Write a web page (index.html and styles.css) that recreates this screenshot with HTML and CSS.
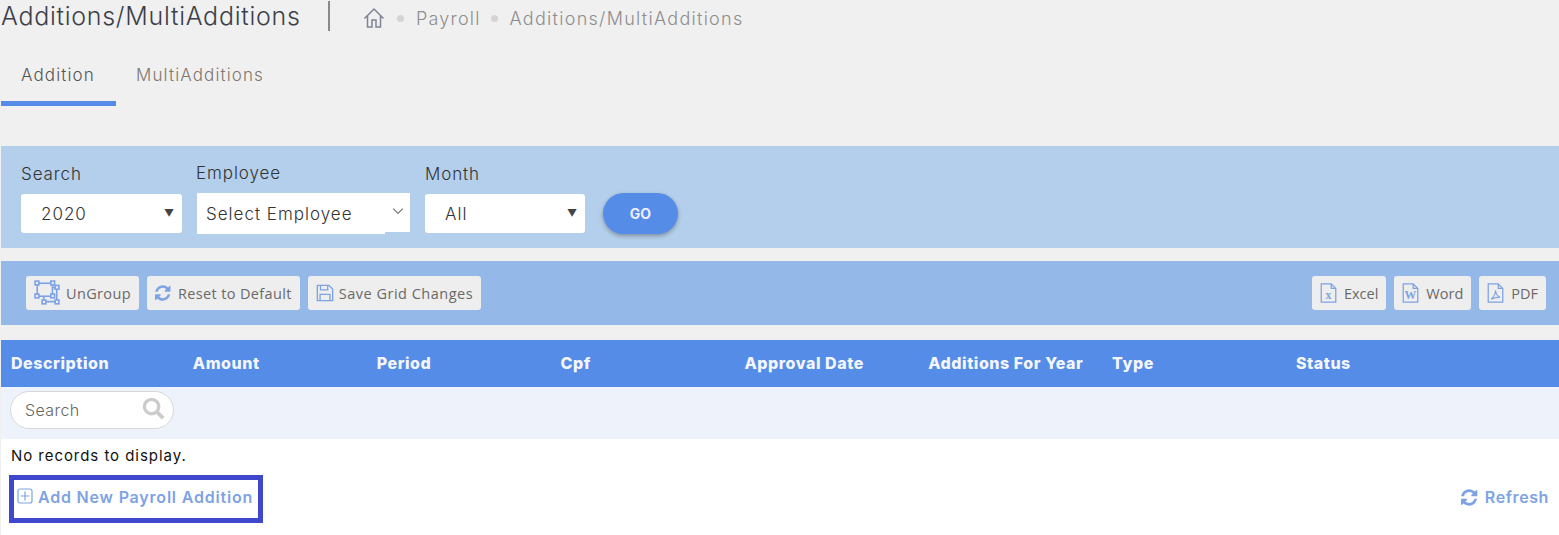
FILE: index.html
```html
<!DOCTYPE html>
<html lang="en">
<head>
<meta charset="utf-8">
<title>Additions/MultiAdditions</title>
<link rel="stylesheet" href="styles.css">
</head>
<body>
<header class="page-head">
  <h1 class="page-title">Additions/MultiAdditions</h1>
  <span class="head-sep"></span>
  <nav class="crumbs">
    <svg class="home-icon" viewBox="0 0 22 22"><path d="M1.500 11.500 11 2l9.500 9.500M4.500 9v11h4.500v-7h4v7h4.500V9" fill="none" stroke="#7f8494" stroke-width="1.500"/></svg>
    <i class="dot"></i><span class="crumb-first">Payroll</span><i class="dot"></i><span class="crumb-last">Additions/MultiAdditions</span>
  </nav>
</header>
<div class="tabs">
  <a class="tab active">Addition</a>
  <a class="tab">MultiAdditions</a>
</div>
<section class="filters">
  <div class="field"><label>Search</label><div class="select">2020<b class="caret">▼</b></div></div>
  <div class="field emp"><label>Employee</label><div class="select employee">Select Employee<svg class="chev" viewBox="0 0 10 6"><path d="M1 1l4 4 4-4" fill="none" stroke="#777" stroke-width="1"/></svg></div></div>
  <div class="field month"><label>Month</label><div class="select">All<b class="caret">▼</b></div></div>
  <button class="go">GO</button>
</section>
<section class="toolbar">
  <div class="tool-group">
    <a class="tool wide ug"><svg class="ic" viewBox="0 0 24 24"><g fill="none" stroke="#7ea3e4" stroke-width="1.500"><rect x="3" y="3" width="14" height="12"/><path d="M9 15v5h12V7h-4"/><rect x="1" y="1" width="3.500" height="3.500" fill="#eee"/><rect x="15.500" y="1" width="3.500" height="3.500" fill="#eee"/><rect x="1" y="13" width="3.500" height="3.500" fill="#eee"/><rect x="15.500" y="13" width="3.500" height="3.500" fill="#eee"/><rect x="19.500" y="5" width="3.500" height="3.500" fill="#eee"/><rect x="7.500" y="18.500" width="3.500" height="3.500" fill="#eee"/><rect x="19.500" y="18.500" width="3.500" height="3.500" fill="#eee"/></g></svg>UnGroup</a>
    <a class="tool wide"><svg class="ic sm" viewBox="0 0 1792 1792"><path fill="#7ea3e4" d="M1511 1056q0 5-1 7-64 268-268 434.500t-478 166.500q-146 0-282.500-55t-243.500-157l-129 129q-19 19-45 19t-45-19-19-45v-448q0-26 19-45t45-19h448q26 0 45 19t19 45-19 45l-137 137q71 66 161 102t187 36q134 0 250-65t186-179q11-17 53-117 8-23 30-23h192q13 0 22.500 9.500t9.500 22.500zm25-800v448q0 26-19 45t-45 19h-448q-26 0-45-19t-19-45 19-45l138-138q-148-137-349-137-134 0-250 65t-186 179q-11 17-53 117-8 23-30 23h-199q-13 0-22.500-9.500t-9.500-22.500v-7q65-268 270-434.500t480-166.500q146 0 284 55.500t245 156.500l130-129q19-19 45-19t45 19 19 45z"/></svg>Reset to Default</a>
    <a class="tool wide save"><svg class="ic sm" viewBox="0 0 20 20"><path d="M1.500 1.500h13l4 4v13h-17z" fill="none" stroke="#7ea3e4" stroke-width="1.500"/><path d="M5 1.500v5h8v-5M4.500 18.500v-7h11v7" fill="none" stroke="#7ea3e4" stroke-width="1.500"/></svg>Save Grid Changes</a>
  </div>
  <div class="tool-group">
    <a class="tool"><svg class="ic doc" viewBox="0 0 18 22"><path d="M1 1h11l5 5v15H1zM12 1v5h5" fill="none" stroke="#7ea3e4" stroke-width="1.400"/><text x="9" y="18" class="doc-l">x</text></svg>Excel</a>
    <a class="tool"><svg class="ic doc" viewBox="0 0 18 22"><path d="M1 1h11l5 5v15H1zM12 1v5h5" fill="none" stroke="#7ea3e4" stroke-width="1.400"/><text x="9" y="18" class="doc-l">W</text></svg>Word</a>
    <a class="tool"><svg class="ic doc" viewBox="0 0 18 22"><path d="M1 1h11l5 5v15H1zM12 1v5h5" fill="none" stroke="#7ea3e4" stroke-width="1.400"/><path d="M9 8c0 4-1.500 7-5 10 3-1.500 7-2.500 10-2.500-3-1-4.500-3.500-5-7.500z" fill="none" stroke="#7ea3e4" stroke-width="1.200"/></svg>PDF</a>
  </div>
</section>
<section class="grid">
  <div class="grid-head">
    <span class="first-col">Description</span><span>Amount</span><span>Period</span><span>Cpf</span><span>Approval Date</span><span>Additions For Year</span><span>Type</span><span>Status</span>
  </div>
  <div class="grid-filter">
    <div class="search-box">Search<svg class="search-ic" viewBox="0 0 24 24"><circle cx="10" cy="10" r="7.500" fill="none" stroke="#ccc" stroke-width="3.500"/><path d="M15.500 15.500 22 22" stroke="#ccc" stroke-width="4"/></svg></div>
  </div>
  <div class="grid-body">
    <p class="empty">No records to display.</p>
    <div class="grid-foot">
      <a class="add-new"><svg class="plus" viewBox="0 0 16 16"><rect x="1" y="1" width="14" height="14" rx="2" fill="none" stroke="#7ea3e4" stroke-width="1.200"/><path d="M8 3.500v9M3.500 8h9" stroke="#7ea3e4" stroke-width="1.200"/></svg><span>Add New Payroll Addition</span></a>
      <a class="refresh"><svg class="ref-ic" viewBox="0 0 1792 1792"><path fill="#7ea3e4" d="M1511 1056q0 5-1 7-64 268-268 434.500t-478 166.500q-146 0-282.500-55t-243.500-157l-129 129q-19 19-45 19t-45-19-19-45v-448q0-26 19-45t45-19h448q26 0 45 19t19 45-19 45l-137 137q71 66 161 102t187 36q134 0 250-65t186-179q11-17 53-117 8-23 30-23h192q13 0 22.500 9.500t9.500 22.500zm25-800v448q0 26-19 45t-45 19h-448q-26 0-45-19t-19-45 19-45l138-138q-148-137-349-137-134 0-250 65t-186 179q-11 17-53 117-8 23-30 23h-199q-13 0-22.500-9.500t-9.500-22.500v-7q65-268 270-434.500t480-166.500q146 0 284 55.500t245 156.500l130-129q19-19 45-19t45 19 19 45z"/></svg>Refresh</a>
    </div>
  </div>
</section>
</body>
</html>
```
FILE: styles.css
```css
* { box-sizing: border-box; }
html, body { margin: 0; padding: 0; }
body {
  width: 1559px;
  height: 535px;
  overflow: hidden;
  background: #f0f0f0;
  font-family: Inter, "Open Sans", sans-serif;
  color: #333;
}
.page-head {
  display: flex;
  align-items: center;
  height: 32px;
  padding-left: 1px;
}
.page-title {
  margin: 0;
  font-size: 25px;
  font-weight: 300;
  color: #3b3f4a;
  width: 300px;
  letter-spacing: 0.72px;
  white-space: nowrap;
}
.head-sep { width: 2px; height: 30px; background: #8a8a8a; margin-left: 27px; }
.crumbs {
  display: flex;
  align-items: center;
  margin-left: 33px;
  font-size: 18px;
  font-weight: 300;
  color: #8e8e8e;
  letter-spacing: 1.2px;
  padding-top: 4px;
}
.home-icon { width: 22px; height: 22px; margin-right: 12px; }
.dot { width: 7px; height: 7px; border-radius: 50%; background: #d4d4d4; margin-right: 12px; }
.crumb-first { margin-right: 10px; }
.crumb-first + .dot { margin-right: 12px; }
.crumb-last { letter-spacing: 1.28px; }
.tabs {
  display: flex;
  height: 74px;
  margin-left: 1px;
}
.tab {
  padding: 33px 20px 0;
  font-size: 17px;
  font-weight: 300;
  color: #80766f;
  letter-spacing: 1.12px;
  white-space: nowrap;
  width: 115px;
}
.tab.active { border-bottom: 5px solid #558ce8; color: #555; }
.tab + .tab { width: auto; }
.filters {
  display: flex;
  margin: 40px 0 13px 1px;
  height: 102px;
  padding: 16px 0 0 20px;
  background: #b4cfeb;
}
.field { width: 161px; margin-right: 14px; }
.field.emp { width: 214px; margin-right: 15px; }
.field.month { width: 160px; margin-right: 18px; }
.field label {
  display: block;
  font-size: 17px;
  font-weight: 300;
  color: #333;
  letter-spacing: 0.9px;
  line-height: 24px;
  margin-bottom: 8px;
}
.emp label { margin-top: -1px; margin-bottom: 9px; }
.select {
  position: relative;
  height: 39px;
  background: #fff;
  border-radius: 3px;
  padding-left: 20px;
  font-size: 17px;
  font-weight: 300;
  letter-spacing: 1px;
  line-height: 41px;
  color: #333;
}
.employee {
  height: 41px;
  margin-top: -1px;
  margin-left: 1px;
  border-radius: 0;
  padding-left: 9px;
  line-height: 43px;
  background: linear-gradient(#fff, #fff) 0 0 / 100% 39px no-repeat, linear-gradient(#fff, #fff) 0 0 / 188px 100% no-repeat;
}
.caret {
  position: absolute;
  right: 7px;
  top: -1px;
  font-size: 10px;
  font-weight: 400;
  color: #444;
}
.chev { position: absolute; right: 6px; top: 14px; width: 12px; height: 8px; }
.go {
  align-self: flex-start;
  margin-top: 31px;
  width: 75px;
  height: 41px;
  border: 0;
  border-radius: 21px;
  background: #558ce8;
  color: #eef;
  font-family: inherit;
  font-size: 14px;
  font-weight: 700;
  box-shadow: 0 2px 4px rgba(0, 0, 0, .3);
}
.toolbar {
  display: flex;
  justify-content: space-between;
  align-items: flex-start;
  margin: 0 0 15px 1px;
  height: 64px;
  padding: 15px 13px 0 25px;
  background: #94b9e8;
}
.tool-group { display: flex; gap: 8px; }
.tool {
  display: flex;
  align-items: center;
  height: 34px;
  padding: 0 8px;
  background: #eee;
  border-radius: 3px;
  font-family: "Open Sans", sans-serif;
  font-size: 14.5px;
  color: #696969;
  white-space: nowrap;
}
.tool.wide { letter-spacing: 0.36px; }
.tool.save { letter-spacing: 0.5px; }
.ic { width: 26px; height: 26px; margin-right: 5px; }
.ug .ic { margin-right: 6px; }
.ic.sm { width: 18px; height: 18px; margin-right: 5px; }
.ic.doc { width: 17px; height: 20px; margin-right: 7px; }
.doc-l { font: 700 13px "Liberation Serif", serif; fill: #7ea3e4; text-anchor: middle; }
.grid { margin-left: 1px; background: #fff; height: 195px; }
.grid-head {
  display: grid;
  grid-template-columns: repeat(8, 183.85px);
  align-items: center;
  height: 47px;
  padding: 0 0 2px 8px;
  background: #558ce8;
  color: #f3f6fd;
  font-size: 16px;
  font-weight: 800;
  letter-spacing: 0.55px;
}
.first-col { padding-left: 2px; }
.grid-filter {
  height: 52px;
  padding: 4px 0 0 9px;
  background: #eef3fb;
}
.search-box {
  position: relative;
  width: 164px;
  height: 38px;
  padding-left: 14px;
  border: 1px solid #d8d8d8;
  border-radius: 19px;
  background: #fff;
  font-size: 16px;
  font-weight: 300;
  letter-spacing: 0.4px;
  line-height: 36px;
  color: #666;
}
.search-ic { position: absolute; right: 8px; top: 5px; width: 23px; height: 23px; }
.grid-body { position: relative; }
.empty {
  margin: 0;
  padding: 7px 0 0 10px;
  font-size: 15px;
  font-weight: 400;
  letter-spacing: 0.95px;
  line-height: 20px;
  color: #111;
}
.grid-foot {
  display: flex;
  justify-content: space-between;
  align-items: center;
  padding: 9px 10px 0 8px;
}
.add-new {
  display: flex;
  align-items: center;
  width: 254px;
  height: 48px;
  padding: 0 0 4px 3px;
  border: 5px solid #3f48cc;
  color: #7ea3e4;
  font-size: 16px;
  font-weight: 600;
  letter-spacing: 0.8px;
  white-space: nowrap;
}
.plus { width: 16px; height: 16px; margin: -3px 5px 0 0; }
.refresh {
  display: flex;
  align-items: center;
  padding-bottom: 4px;
  color: #7ea3e4;
  font-size: 16px;
  font-weight: 600;
  letter-spacing: 0.6px;
}
.ref-ic { width: 19px; height: 19px; margin-right: 5px; }
```
